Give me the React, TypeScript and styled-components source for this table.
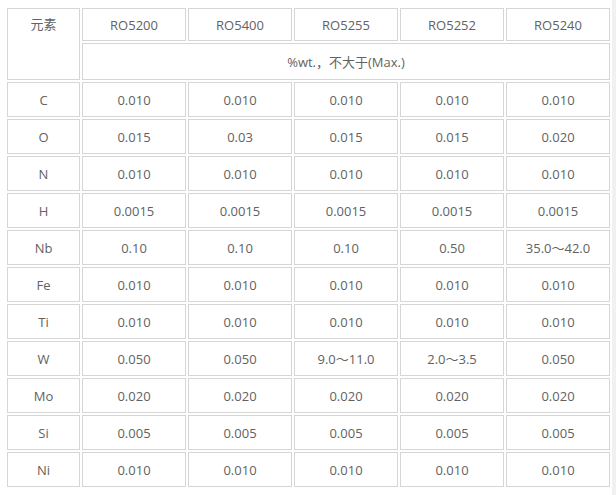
import React from "react";
import styled, { createGlobalStyle } from "styled-components";

const GlobalStyle = createGlobalStyle`
  html, body {
    margin: 0;
    padding: 0;
    background: #ffffff;
  }
  body {
    font-family: "Open Sans", "Noto Sans", "Noto Sans CJK SC", sans-serif;
  }
`;

const Page = styled.div`
  display: flex;
  width: 616px;
  min-height: 495px;
  background: #ffffff;
`;

const Content = styled.div`
  flex: 1;
  padding: 6px 0 0 5px;
`;

const Edge = styled.div`
  width: 4px;
  background: #f1f1f1;
`;

const Table = styled.table`
  width: 607px;
  table-layout: fixed;
  border-collapse: separate;
  border-spacing: 2px;
  color: #626262;
  font-size: 13px;
`;

const Cell = styled.td<{ $top?: boolean; $h?: number }>`
  box-sizing: border-box;
  height: ${(p) => p.$h ?? 35}px;
  padding: ${(p) => (p.$top ? "6px 0 0" : "0")};
  border: 1px solid #d6d6d6;
  text-align: center;
  vertical-align: ${(p) => (p.$top ? "top" : "middle")};
  white-space: nowrap;
  line-height: 18px;
`;

const Cjk = styled.span`
  font-family: "Noto Sans CJK SC", "Open Sans", sans-serif;
`;

const grades = ["RO5200", "RO5400", "RO5255", "RO5252", "RO5240"];

const rows: [string, string[]][] = [
  ["C", ["0.010", "0.010", "0.010", "0.010", "0.010"]],
  ["O", ["0.015", "0.03", "0.015", "0.015", "0.020"]],
  ["N", ["0.010", "0.010", "0.010", "0.010", "0.010"]],
  ["H", ["0.0015", "0.0015", "0.0015", "0.0015", "0.0015"]],
  ["Nb", ["0.10", "0.10", "0.10", "0.50", "35.0～42.0"]],
  ["Fe", ["0.010", "0.010", "0.010", "0.010", "0.010"]],
  ["Ti", ["0.010", "0.010", "0.010", "0.010", "0.010"]],
  ["W", ["0.050", "0.050", "9.0～11.0", "2.0～3.5", "0.050"]],
  ["Mo", ["0.020", "0.020", "0.020", "0.020", "0.020"]],
  ["Si", ["0.005", "0.005", "0.005", "0.005", "0.005"]],
  ["Ni", ["0.010", "0.010", "0.010", "0.010", "0.010"]],
];

export default function App() {
  return (
    <>
      <GlobalStyle />
      <Page>
        <Content>
          <Table>
            <colgroup>
              <col style={{ width: 73 }} />
              {grades.map((g) => (
                <col key={g} style={{ width: 104 }} />
              ))}
            </colgroup>
            <tbody>
              <tr>
                <Cell rowSpan={2} $top $h={33}>
                  <Cjk>元素</Cjk>
                </Cell>
                {grades.map((g) => (
                  <Cell key={g} $h={33}>
                    {g}
                  </Cell>
                ))}
              </tr>
              <tr>
                <Cell colSpan={5} $h={37}>
                  %wt.<Cjk>，不大于</Cjk>(Max.)
                </Cell>
              </tr>
              {rows.map(([el, vals]) => (
                <tr key={el}>
                  <Cell>{el}</Cell>
                  {vals.map((v, i) => (
                    <Cell key={i}>{v}</Cell>
                  ))}
                </tr>
              ))}
            </tbody>
          </Table>
        </Content>
        <Edge />
      </Page>
    </>
  );
}
